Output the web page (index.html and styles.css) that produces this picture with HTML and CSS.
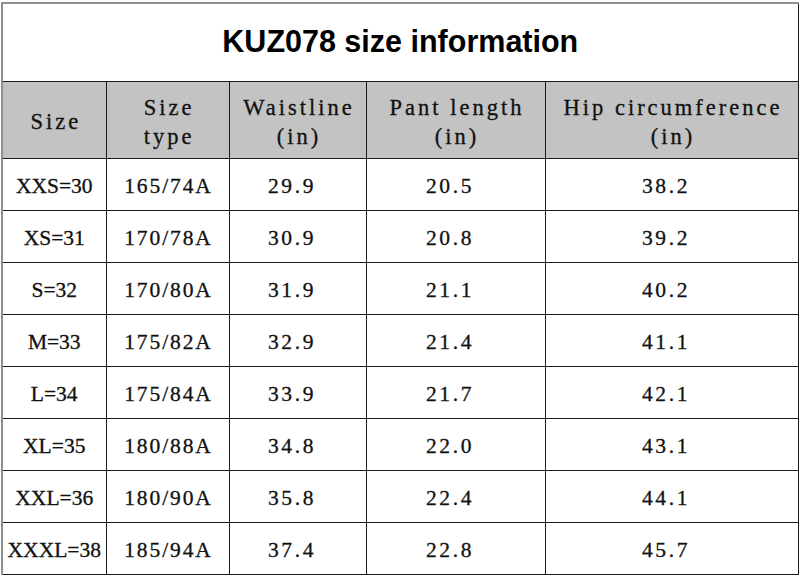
FILE: index.html
```html
<!DOCTYPE html>
<html>
<head>
<meta charset="utf-8">
<link rel="stylesheet" href="styles.css">
</head>
<body>
<table class="chart">
  <colgroup>
    <col class="c1"><col class="c2"><col class="c3"><col class="c4"><col class="c5">
  </colgroup>
  <tr class="title-row"><td colspan="5" class="title">KUZ078 size information</td></tr>
  <tr class="head-row">
    <th>Size</th>
    <th>Size<br>type</th>
    <th>Waistline<br>(in)</th>
    <th>Pant length<br>(in)</th>
    <th>Hip circumference<br>(in)</th>
  </tr>
  <tr><td class="sz">XXS=30</td><td class="st">165/74A</td><td class="num">29.9</td><td class="num">20.5</td><td class="num">38.2</td></tr>
  <tr><td class="sz">XS=31</td><td class="st">170/78A</td><td class="num">30.9</td><td class="num">20.8</td><td class="num">39.2</td></tr>
  <tr><td class="sz">S=32</td><td class="st">170/80A</td><td class="num">31.9</td><td class="num">21.1</td><td class="num">40.2</td></tr>
  <tr><td class="sz">M=33</td><td class="st">175/82A</td><td class="num">32.9</td><td class="num">21.4</td><td class="num">41.1</td></tr>
  <tr><td class="sz">L=34</td><td class="st">175/84A</td><td class="num">33.9</td><td class="num">21.7</td><td class="num">42.1</td></tr>
  <tr><td class="sz">XL=35</td><td class="st">180/88A</td><td class="num">34.8</td><td class="num">22.0</td><td class="num">43.1</td></tr>
  <tr><td class="sz">XXL=36</td><td class="st">180/90A</td><td class="num">35.8</td><td class="num">22.4</td><td class="num">44.1</td></tr>
  <tr class="last"><td class="sz">XXXL=38</td><td class="st">185/94A</td><td class="num">37.4</td><td class="num">22.8</td><td class="num">45.7</td></tr>
</table>
</body>
</html>
```

FILE: styles.css
```css
html, body {
  margin: 0;
  padding: 0;
  background: #ffffff;
}

body {
  padding: 2px 0 0 1px;
  width: 800px;
  height: 580px;
  box-sizing: border-box;
  overflow: hidden;
}

.chart {
  border-collapse: collapse;
  table-layout: fixed;
  width: 796px;
  font-family: "Liberation Serif", "Times New Roman", serif;
  color: #111;
  border-top: 2px solid #8f8f8f;
  border-left: 2px solid #8f8f8f;
}

.c1 { width: 104px; }
.c2 { width: 123px; }
.c3 { width: 137px; }
.c4 { width: 179px; }
.c5 { width: 253px; }

.chart td,
.chart th {
  border: 1px solid #1a1a1a;
  padding: 0;
  text-align: center;
  vertical-align: middle;
  -webkit-text-stroke: 0.3px #111;
}

.chart .title-row td {
  border-top: 2px solid #8f8f8f;
  border-left: 2px solid #8f8f8f;
}

.chart .title {
  height: 75px;
  font-family: "Liberation Sans", Arial, sans-serif;
  font-weight: bold;
  font-size: 30.5px;
  color: #000;
  padding-bottom: 2px;
  -webkit-text-stroke: 0;
}

.chart .head-row th {
  height: 73px;
  padding-top: 3px;
  background: #c3c3c3;
  font-weight: normal;
  font-size: 22.5px;
  line-height: 29px;
  letter-spacing: 3px;
  padding-left: 3px;
}

.chart .head-row th:first-child,
.chart tr td:first-child {
  border-left: 2px solid #8f8f8f;
}

.chart tr:not(.title-row):not(.head-row) td {
  height: 48px;
  padding-top: 3px;
  font-size: 21.5px;
}

.chart tr.last td {
  height: 49px;
}

.chart .sz {
  letter-spacing: 0;
}

.chart .st {
  letter-spacing: 1.9px;
  padding-left: 2px;
}

.chart .num {
  letter-spacing: 2.6px;
  padding-right: 11px;
}
```
